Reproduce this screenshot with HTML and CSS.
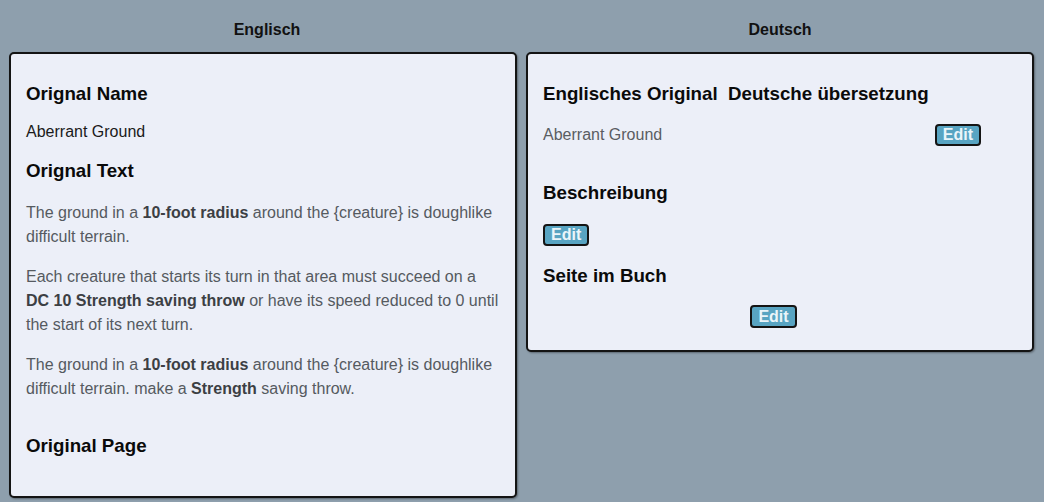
FILE: index.html
```html
<!DOCTYPE html>
<html lang="de">
<head>
<meta charset="utf-8">
<title>Übersetzung</title>
<link rel="stylesheet" href="styles.css">
</head>
<body>
<main class="columns">
  <section class="column">
    <h2 class="col-title col-title-en">Englisch</h2>
    <div class="card card-en">
      <h3 class="heading">Orignal Name</h3>
      <p class="name">Aberrant Ground</p>
      <h3 class="heading heading-text">Orignal Text</h3>
      <p class="para para-first">The ground in a <b>10-foot radius</b> around the {creature} is doughlike difficult terrain.</p>
      <p class="para">Each creature that starts its turn in that area must succeed on a <b>DC 10 Strength saving throw</b> or have its speed reduced to 0 until the start of its next turn.</p>
      <p class="para">The ground in a <b>10-foot radius</b> around the {creature} is doughlike difficult terrain. make a <b>Strength</b> saving throw.</p>
      <h3 class="heading heading-page">Original Page</h3>
    </div>
  </section>
  <section class="column">
    <h2 class="col-title">Deutsch</h2>
    <div class="card card-de">
      <h3 class="heading">Englisches Original&nbsp; Deutsche übersetzung</h3>
      <div class="row row-name">
        <span class="muted">Aberrant Ground</span>
        <button class="edit edit-name" type="button">Edit</button>
      </div>
      <h3 class="heading heading-desc">Beschreibung</h3>
      <div class="row row-desc">
        <button class="edit" type="button">Edit</button>
      </div>
      <h3 class="heading heading-book">Seite im Buch</h3>
      <div class="row row-page">
        <button class="edit" type="button">Edit</button>
      </div>
    </div>
  </section>
</main>
</body>
</html>
```

FILE: styles.css
```css
* { box-sizing: border-box; }

html, body {
  height: 100%;
}

body {
  margin: 0;
  background: #8e9fad;
  font-family: "Liberation Sans", Arial, sans-serif;
  color: #111;
}

.columns {
  display: grid;
  grid-template-columns: 1fr 1fr;
  column-gap: 9px;
  align-items: start;
  padding: 21px 10px 0 9px;
}

.col-title {
  margin: 0 0 13px;
  text-align: center;
  font-size: 16px;
  line-height: 18px;
  font-weight: bold;
  color: #111;
}

.col-title-en { padding-left: 8px; }

.card {
  background: #eceff8;
  border: 2px solid #141414;
  border-radius: 5px;
  box-shadow: 1px 1px 2px rgba(0, 0, 0, 0.35);
  padding: 29px 15px 0;
}

.card-en { padding-bottom: 39px; }
.card-de { padding-bottom: 22px; }

.heading {
  margin: 0;
  font-size: 18.72px;
  line-height: 22px;
  font-weight: bold;
  color: #0a0a0a;
}

.name {
  margin: 18px 0 0;
  font-size: 16px;
  line-height: 18px;
  color: #1a1a1a;
}

.heading-text { margin-top: 19px; }

.para {
  margin: 16px 0 0;
  font-size: 16px;
  line-height: 24px;
  color: #555a60;
}

.para b { color: #3c3f44; }

.para-first { margin-top: 19px; }

.heading-page { margin-top: 34px; }

.row {
  display: flex;
  align-items: center;
}

.row-name { margin-top: 19px; }

.muted {
  font-size: 16px;
  line-height: 18px;
  color: #5a5d62;
}

.heading-desc { margin-top: 36px; }
.row-desc { margin-top: 20px; }
.heading-book { margin-top: 19px; }

.row-page {
  margin-top: 18px;
  justify-content: center;
  padding-right: 13px;
}

.row-page .edit {
  line-height: 19px;
}

.edit {
  display: inline-block;
  margin: 0;
  padding: 0 6px;
  background: #58a4c2;
  border: 2px solid #141414;
  border-radius: 4px;
  color: #eaf5fa;
  font-family: "Liberation Sans", Arial, sans-serif;
  font-size: 16px;
  line-height: 18px;
  font-weight: bold;
  cursor: pointer;
}

.row .edit-name {
  margin-left: auto;
  margin-right: 36px;
}
```
